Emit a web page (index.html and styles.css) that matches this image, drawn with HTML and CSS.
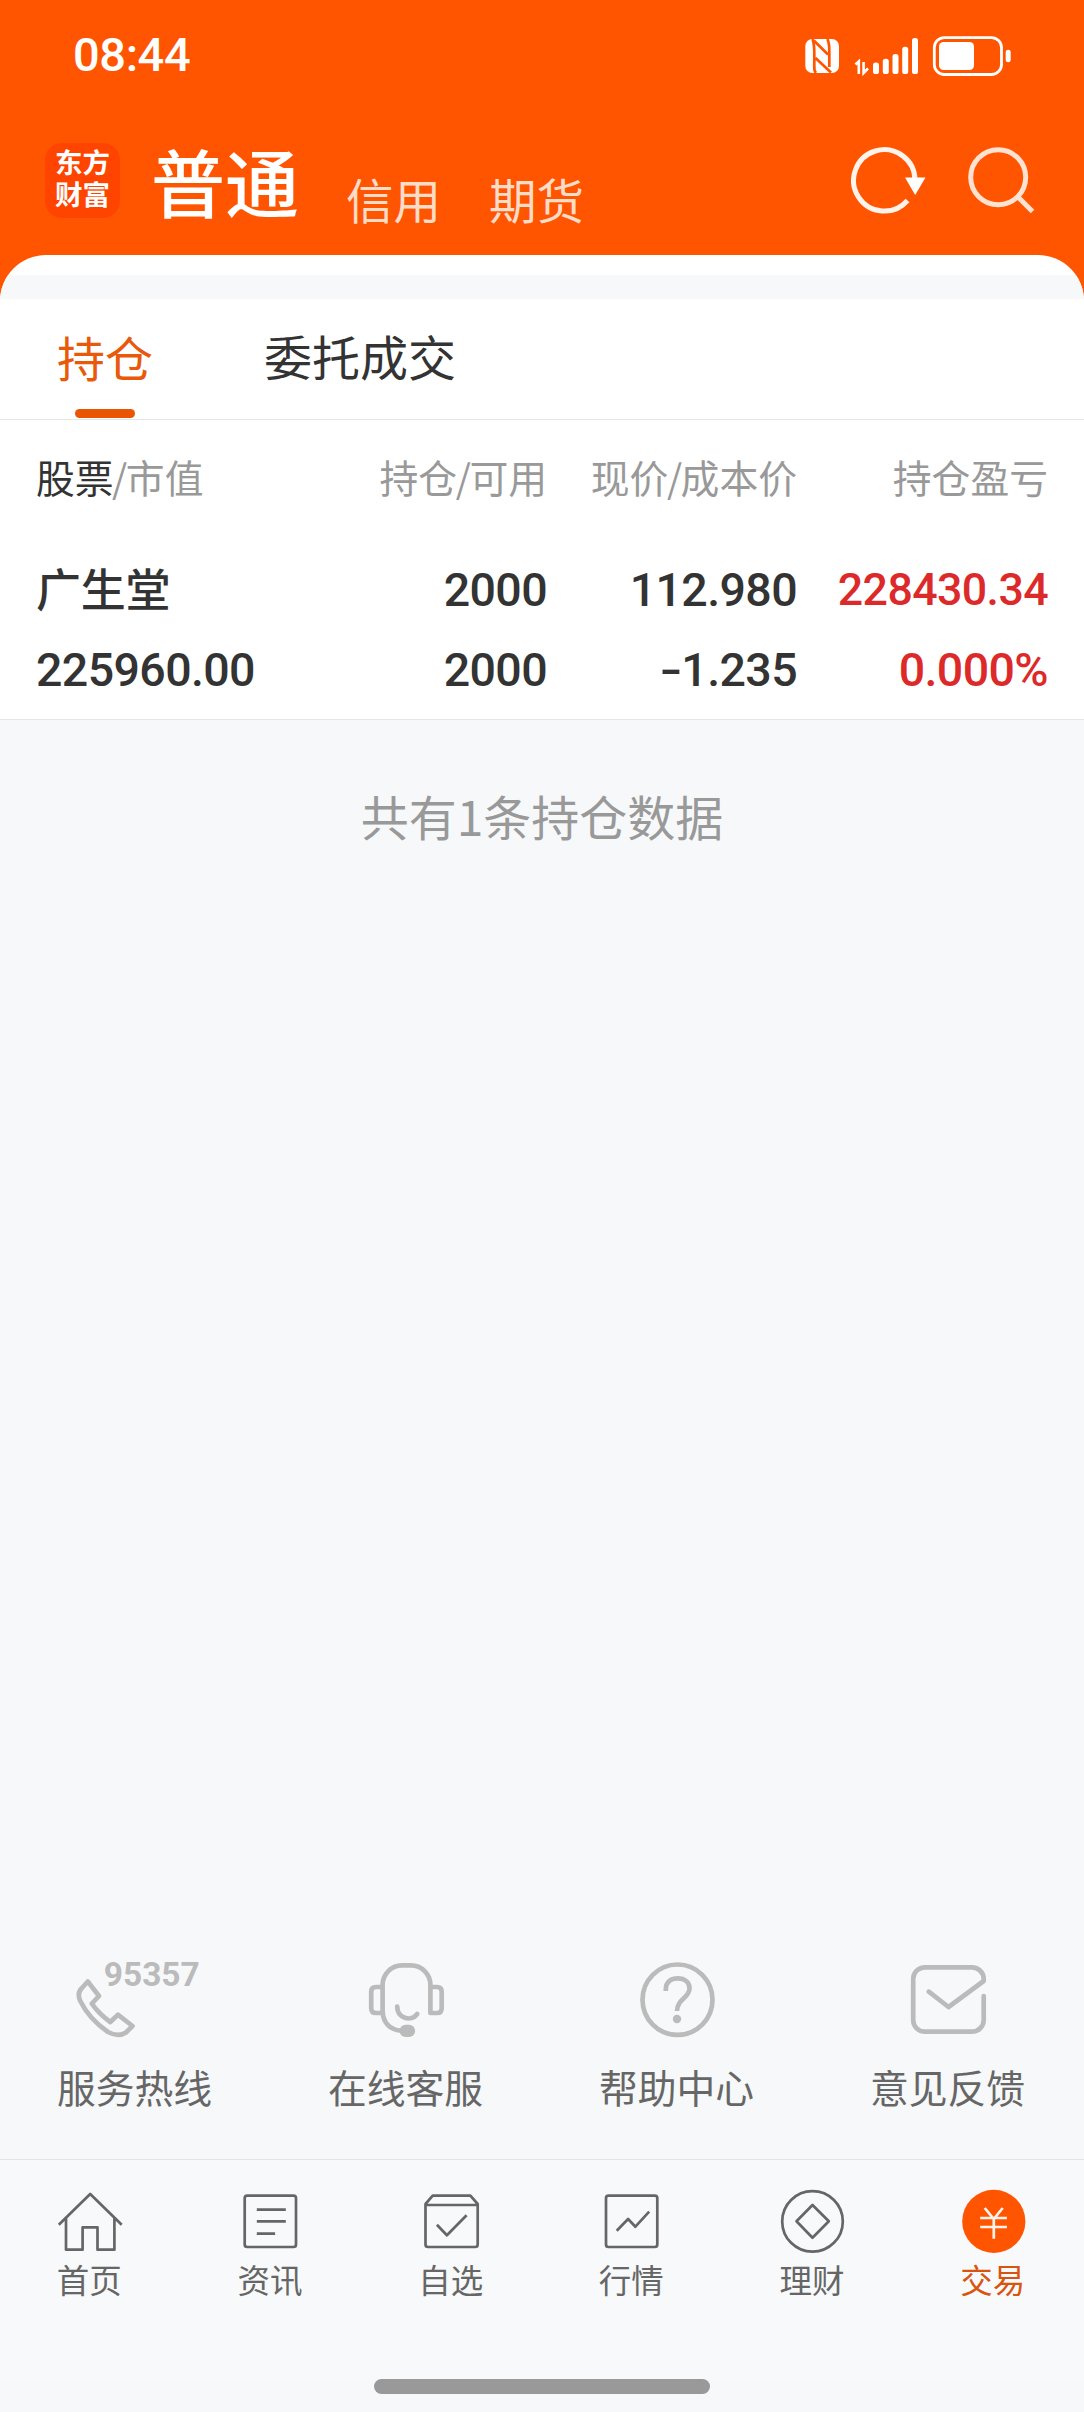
FILE: index.html
```html
<!DOCTYPE html>
<html lang="zh-CN">
<head>
<meta charset="utf-8">
<title>普通交易 - 持仓</title>
<link rel="stylesheet" href="styles.css">
</head>
<body>
<div class="app">
  <header class="top">
    <div class="status">
      <span class="time">08:44</span>
      <svg class="status-icons" width="208" height="42" viewBox="0 0 208 42">
        <rect x="1.300" y="3" width="33.700" height="34" rx="7" fill="#fff"/>
        <path d="M8.500 3Q10.500 8 10.300 20V30Q10 35 12 37M9.800 4.500L24 18.500M11.500 22L27 36.500M23.500 3Q25.500 8 25.300 16V31" fill="none" stroke="#f50" stroke-width="2.700"/>
        <path d="M51.500 28.500L54.800 25.500V38M59.600 26V37L64 32.500" fill="none" stroke="#fff" stroke-width="2.600"/>
        <g fill="#fff">
          <rect x="69" y="26.500" width="6" height="11.500" rx="2.600"/>
          <rect x="78.800" y="22.700" width="6" height="15.300" rx="2.600"/>
          <rect x="88.500" y="18" width="6" height="20" rx="2.600"/>
          <rect x="98.200" y="10.700" width="6" height="27.300" rx="2.600"/>
          <rect x="108" y="2" width="6" height="36" rx="2.600"/>
          <rect x="135" y="6" width="35" height="28" rx="4.500"/>
          <rect x="201.700" y="13.700" width="5" height="12.600" rx="2.400"/>
        </g>
        <rect x="130.300" y="1.600" width="67.200" height="36.900" rx="10" fill="none" stroke="#fff" stroke-width="2.800"/>
      </svg>
    </div>
    <div class="bar">
      <div class="logo"><span>东方</span><span>财富</span></div>
      <nav class="accounts">
        <span class="current">普通</span><span class="other">信用</span><span class="other">期货</span>
      </nav>
      <div class="actions">
        <svg width="76" height="70" viewBox="0 0 76 70" fill="none">
          <path d="M64 34A30.700 30.700 0 1 0 56.500 54.500" stroke="#fff3eb" stroke-width="5"/>
          <path d="M54 31.500H74.500L64.200 49Z" fill="#fff"/>
        </svg>
        <svg width="70" height="70" viewBox="0 0 70 70" fill="none" stroke="#ffe2d2" stroke-width="5">
          <circle cx="32.200" cy="31.300" r="27.500"/>
          <path d="M52 51L66.500 65.500"/>
        </svg>
      </div>
    </div>
  </header>
  <div class="sheet"><div class="band"></div></div>
  <nav class="tabs">
    <span class="tab active">持仓</span>
    <span class="tab">委托成交</span>
  </nav>
  <section class="holdings">
    <div class="row head">
      <span><b>股票</b><i>/</i>市值</span><span>持仓<i>/</i>可用</span><span>现价<i>/</i>成本价</span><span>持仓盈亏</span>
    </div>
    <div class="row num first">
      <span class="name">广生堂</span><span>2000</span><span>112.980</span><span class="gain fit">228430.34</span>
    </div>
    <div class="row num second">
      <span>225960.00</span><span>2000</span><span><i class="minus">-</i>1.235</span><span class="gain">0.000%</span>
    </div>
  </section>
  <p class="summary">共有1条持仓数据</p>
  <section class="services">
    <div class="service">
      <svg width="271" height="90" viewBox="0 0 271 90">
        <path d="M87.800 26.500L99 41L91.800 48.700Q99 59 110.300 67L117.900 59.700L132.500 71L126 77.500Q118.200 82.500 108 77Q89 64 80 45.500Q77 38 81.500 33.500Z"/>
        <text x="103.700" y="31">95357</text>
      </svg>
      <span>服务热线</span>
    </div>
    <div class="service">
      <svg width="271" height="90" viewBox="0 0 271 90">
        <path d="M159.400 58V30A19.500 19.700 0 0 0 139.900 10.300H131.100A19.500 19.700 0 0 0 111.600 30V56Q112.500 74 130 75.700M111.600 32H105Q100.200 32 100.200 37V53Q100.200 58 105 58H111.600M159.400 32H166Q170.700 32 170.700 37V53Q170.700 58 166 58H159.400M126.200 51.500C126.200 63 140 67.500 146.200 59"/>
        <rect class="solid" x="128.600" y="69.700" width="15.500" height="12.300" rx="6"/>
      </svg>
      <span>在线客服</span>
    </div>
    <div class="service">
      <svg width="271" height="90" viewBox="0 0 271 90">
        <ellipse cx="135.500" cy="44.700" rx="35" ry="35.200"/>
        <path class="butt" d="M123.800 36V34.500C123.800 27 129 23.400 135.800 23.400C143 23.400 147.500 27.500 147.500 33.500C147.500 43 135 44 135 56"/>
        <circle class="solid" cx="135" cy="64" r="4.200"/>
      </svg>
      <span>帮助中心</span>
    </div>
    <div class="service">
      <svg width="271" height="90" viewBox="0 0 271 90">
        <path d="M170.700 41V65A11.700 11.700 0 0 1 159 76.700H112A11.700 11.700 0 0 1 100.200 65V24A11.700 11.700 0 0 1 112 12.300H159A11.700 11.700 0 0 1 170.700 24V26L135.500 52L115.800 36.700"/>
      </svg>
      <span>意见反馈</span>
    </div>
  </section>
  <nav class="tabbar">
    <div class="item">
      <svg width="72" height="70" viewBox="0 0 72 70"><path d="M4.800 39.700L36.200 9L67.700 39.700M12 33.300V64.700H28.600V42.300H43.500V64.700H60.400V33.300"/></svg>
      <span>首页</span>
    </div>
    <div class="item">
      <svg width="72" height="70" viewBox="0 0 72 70"><rect x="9.700" y="10.700" width="51.300" height="51.300" rx="2.500"/><path d="M21.800 24.700H50.800M21.800 36.300H50.800M21.800 48.700H40.100"/></svg>
      <span>资讯</span>
    </div>
    <div class="item">
      <svg width="72" height="70" viewBox="0 0 72 70"><path d="M9.500 20H61.700V59.500Q61.700 62 59.200 62H12Q9.500 62 9.500 59.500V19L16.700 10.700H54.400L61.700 19V20M20.900 39.700L30.900 50.300L50.600 30.300"/></svg>
      <span>自选</span>
    </div>
    <div class="item">
      <svg width="72" height="70" viewBox="0 0 72 70"><rect x="10" y="10.700" width="51.300" height="51.300" rx="2.500"/><path d="M20.700 45.700L32.100 34L39.400 41.700L53.200 26.700"/></svg>
      <span>行情</span>
    </div>
    <div class="item">
      <svg width="72" height="70" viewBox="0 0 72 70"><circle cx="35.500" cy="36.400" r="30.300"/><path d="M35.500 20L51.800 36.300L35.500 52.800L19.500 36.300Z"/></svg>
      <span>理财</span>
    </div>
    <div class="item on">
      <svg width="72" height="70" viewBox="0 0 72 70"><circle class="disc" cx="35.800" cy="36.400" r="31.600"/><path d="M26.700 23L35.800 34L44.700 23M35.800 34V53.700M22.200 33H48.900M22.200 42H48.900"/></svg>
      <span>交易</span>
    </div>
  </nav>
  <div class="home-bar"></div>
</div>
</body>
</html>
```

FILE: styles.css
```css
* { box-sizing: border-box; }
body {
  margin: 0;
  background: #f7f8fa;
  font-family: "Noto Sans CJK SC", sans-serif;
  color: #333;
}
.app {
  width: 1084px;
  height: 2412px;
  display: flex;
  flex-direction: column;
  background: #f7f8fa;
}
.top { height: 301px; margin-bottom: -46px; background: #f50; color: #fff; flex: none; }
.status {
  height: 110px;
  padding: 0 72px 0 73px;
  display: flex;
  justify-content: space-between;
}
.time { font: 500 47px/110px Roboto, sans-serif; letter-spacing: -0.4px; }
.status-icons { margin-top: 36px; }
.bar { display: flex; height: 145px; padding: 0 48px 0 45px; }
.logo {
  width: 75px;
  height: 75px;
  margin-top: 33px;
  border-radius: 17px;
  background: #f40;
  display: flex;
  flex-direction: column;
  align-items: center;
  padding-top: 3px;
  gap: 1px;
  font-weight: 700;
  font-size: 27.500px;
  line-height: 31px;
}
.accounts { display: flex; margin-left: 31px; white-space: nowrap; }
.current { font-size: 74px; font-weight: 500; line-height: 140px; width: 195px; }
.other { font-size: 47.500px; line-height: 178px; width: 143px; color: #ffdcc8; }
.actions { display: flex; gap: 39px; margin: 36px 0 0 auto; }
.sheet { height: 46px; flex: none; background: #fff; border-radius: 46px 46px 0 0; padding-top: 20px; overflow: hidden; }
.band { height: 24px; background: #f7f8fa; }
.tabs {
  height: 119px;
  flex: none;
  display: flex;
  gap: 111px;
  padding-left: 57px;
  background: #fff;
  border-bottom: 1px solid #e6e6e6;
}
.tab { font-size: 48px; line-height: 109px; }
.active { color: #e8590c; display: flex; flex-direction: column; align-items: center; line-height: 111px; height: 118px; }
.active::after { content: ""; width: 60px; height: 9px; border-radius: 5px; background: #ea5504; margin-top: -3px; }
.holdings { height: 300px; flex: none; background: #fff; border-bottom: 1px solid #e6e6e6; padding: 0 36px; }
.row { display: grid; grid-template-columns: 260px 251px 250px 251px; }
.row > span { text-align: right; white-space: nowrap; }
.row > span:first-child { text-align: left; }
.head { font-size: 38.800px; line-height: 112px; color: #999; }
.head b { font-weight: 400; color: #333; }
.head i { font-style: normal; margin: 0 -1.500px; }
.num { font: 500 46.500px/80px Roboto, sans-serif; letter-spacing: -0.6px; }
.first { padding-top: 18px; }
.num .name { font: 500 45px/76px "Noto Sans CJK SC", sans-serif; letter-spacing: -0.2px; }
.num .gain { color: #dc2a2a; }
.num .fit { font-size: 44.700px; }
.minus { display: inline-block; font-style: normal; margin-right: 3px; transform: scaleX(1.4); }
.summary { margin: 0; padding-top: 52px; font-size: 48px; line-height: 86px; text-align: center; color: #999; }
.services { display: flex; margin-top: auto; height: 204px; flex: none; }
.service { width: 271px; display: flex; flex-direction: column; font-size: 38.800px; line-height: 82px; text-align: center; color: #666; }
.service span { padding-right: 2px; }
.service svg { fill: none; stroke: #bbb; stroke-width: 4.700px; stroke-linecap: round; stroke-linejoin: round; }
.service .butt { stroke-linecap: butt; }
.service .solid { fill: #bbb; stroke: none; }
.service text { fill: #bbb; stroke: none; font: 700 33.500px Roboto, sans-serif; }
.tabbar { height: 220px; flex: none; display: flex; border-top: 1px solid #e2e4e7; background: #f8f9fb; padding-top: 25px; }
.item { flex: 1; display: flex; flex-direction: column; align-items: center; font-size: 32.500px; line-height: 48px; color: #666; }
.item span { padding-right: 2px; }
.item svg { fill: none; stroke: #666; stroke-width: 2.700px; stroke-linejoin: round; flex: none; }
.on { color: #d9540f; }
.on svg { stroke: #fff3eb; }
.on .disc { fill: #f50; stroke: none; }
.home-bar { width: 336px; height: 15px; flex: none; margin: 0 auto 18px; border-radius: 8px; background: #999; }
```
